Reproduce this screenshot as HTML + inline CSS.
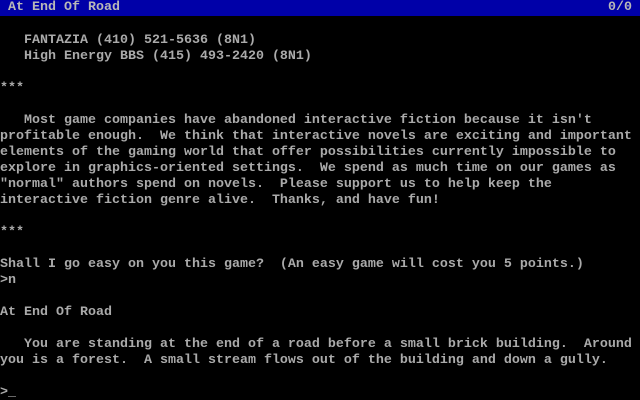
<!DOCTYPE html>
<html><head><meta charset="utf-8"><style>
html,body{margin:0;padding:0;background:#000;width:640px;height:400px;overflow:hidden}
pre{margin:0;font-family:"Liberation Mono","DejaVu Sans Mono",monospace;font-size:13.333px;line-height:16px;color:#aaa;white-space:pre;font-weight:bold}
.bar{background:#0000a8;color:#b8b8b8;height:16px;position:relative}
.r{position:absolute;right:8px;top:0}
.b{padding-top:1px}
</style></head><body>
<pre class="bar"> At End Of Road<span class="r">0/0</span></pre>
<pre class="b">

   FANTAZIA (410) 521-5636 (8N1)
   High Energy BBS (415) 493-2420 (8N1)

***

   Most game companies have abandoned interactive fiction because it isn't
profitable enough.  We think that interactive novels are exciting and important
elements of the gaming world that offer possibilities currently impossible to
explore in graphics-oriented settings.  We spend as much time on our games as
"normal" authors spend on novels.  Please support us to help keep the
interactive fiction genre alive.  Thanks, and have fun!

***

Shall I go easy on you this game?  (An easy game will cost you 5 points.)
&gt;n

At End Of Road

   You are standing at the end of a road before a small brick building.  Around
you is a forest.  A small stream flows out of the building and down a gully.

&gt;_</pre>
</body></html>
